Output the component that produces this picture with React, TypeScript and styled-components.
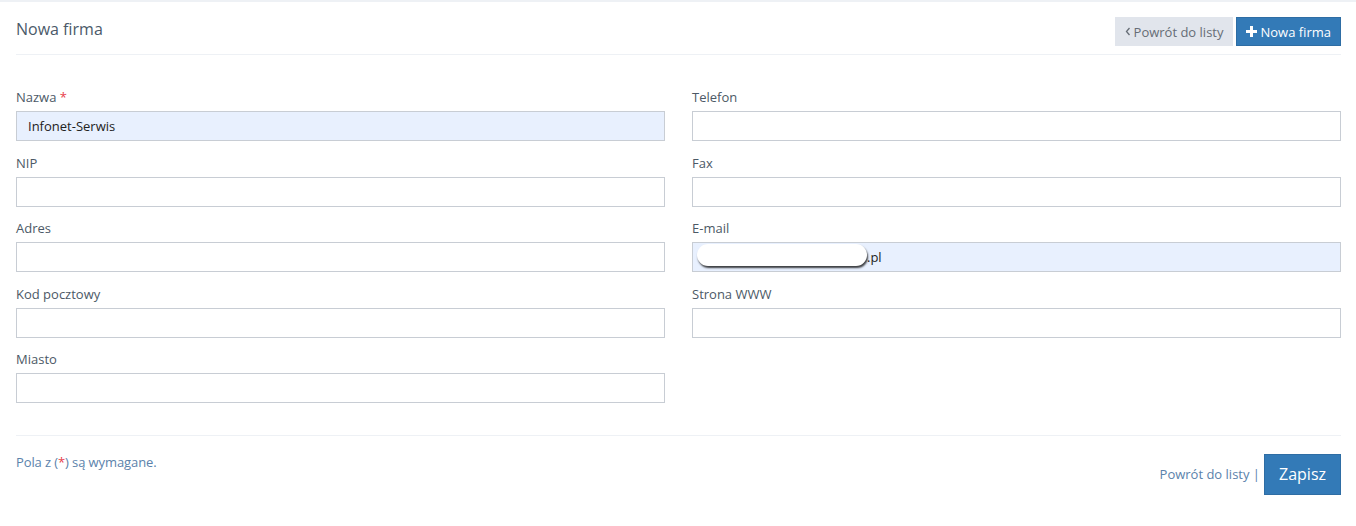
import styled, { createGlobalStyle } from "styled-components";

const GlobalStyle = createGlobalStyle`
    html, body {
        margin: 0;
        padding: 0;
        background: #fff;
        font-family: "Open Sans", "Liberation Sans", sans-serif;
    }
`;

const PageEl = styled.div`
    border-top: 2px solid #eef1f5;
    padding: 0 15px 0 16px;
    width: 1356px;
    box-sizing: border-box;
`;

const HeaderEl = styled.header`
    display: flex;
    justify-content: space-between;
    align-items: center;
    height: 52px;
    border-bottom: 1px solid #eef1f5;
`;

const TitleEl = styled.h1`
    margin: 2px 0 0;
    font-size: 16px;
    font-weight: 400;
    color: #4b5a69;
`;

const ToolbarEl = styled.div`
    display: flex;
    gap: 3px;
    margin-top: 7px;
`;

const ToolButton = styled.button<{ $primary?: boolean }>`
    height: 29px;
    padding: 0 9px;
    font-family: inherit;
    font-size: 13px;
    display: flex;
    align-items: center;
    gap: 3px;
    background: ${(p) => (p.$primary ? "#337ab7" : "#e1e5ec")};
    color: ${(p) => (p.$primary ? "#fff" : "#666d76")};
    border: 1px solid ${(p) => (p.$primary ? "#2e6da4" : "#e1e5ec")};
`;

const FormGrid = styled.div`
    display: grid;
    grid-template-columns: 649px 649px;
    column-gap: 27px;
    padding-top: 34px;
    padding-bottom: 18px;
    border-bottom: 1px solid #eef1f5;
`;

const ColumnEl = styled.div`
    display: flex;
    flex-direction: column;
`;

const FieldEl = styled.div`
    display: flex;
    flex-direction: column;
    height: 65.5px;
`;

const LabelEl = styled.label`
    font-size: 13px;
    color: #4c5966;
    line-height: 16px;
    margin-bottom: 6px;
`;

const RequiredEl = styled.span`
    color: #e73d4a;
`;

const InputWrap = styled.div`
    position: relative;
`;

const InputEl = styled.input<{ $filled?: boolean; $indent?: number }>`
    width: 100%;
    box-sizing: border-box;
    height: 30px;
    border: 1px solid #c8cdd4;
    background: ${(p) => (p.$filled ? "#e8f0fe" : "#fff")};
    font-family: inherit;
    font-size: 13px;
    color: #222;
    padding: 0 11px;
    text-indent: ${(p) => p.$indent ?? 0}px;
    outline: none;
`;

const RedactionEl = styled.div`
    position: absolute;
    left: 5px;
    top: 2px;
    width: 170px;
    height: 22px;
    background: #fff;
    border-radius: 11px;
    box-shadow: 1px 2px 2px rgba(0, 0, 0, 0.75);
`;

const FooterEl = styled.footer`
    display: flex;
    justify-content: space-between;
    align-items: flex-start;
    padding-top: 18px;
`;

const NoteEl = styled.p`
    margin: 1px 0 0;
    font-size: 13px;
    line-height: 14px;
    letter-spacing: -0.1px;
    color: #5b82ab;
`;

const ActionsEl = styled.div`
    display: flex;
    align-items: center;
    gap: 4px;
`;

const BackLink = styled.a`
    font-size: 13px;
    color: #5b82ab;
    text-decoration: none;
`;

const SaveButton = styled.button`
    height: 41px;
    padding: 0 14px;
    background: #337ab7;
    border: 1px solid #2e6da4;
    color: #fff;
    font-family: inherit;
    font-size: 16px;
`;

interface Field {
    label: string;
    required?: boolean;
    value?: string;
    redacted?: boolean;
}

const leftFields: Field[] = [
    { label: "Nazwa", required: true, value: "Infonet-Serwis" },
    { label: "NIP" },
    { label: "Adres" },
    { label: "Kod pocztowy" },
    { label: "Miasto" },
];

const rightFields: Field[] = [
    { label: "Telefon" },
    { label: "Fax" },
    { label: "E-mail", value: ".pl", redacted: true },
    { label: "Strona WWW" },
];

function FormField({ field }: { field: Field }) {
    return (
        <FieldEl>
            <LabelEl>
                {field.label}
                {field.required && <RequiredEl> *</RequiredEl>}
            </LabelEl>
            <InputWrap>
                <InputEl
                    readOnly
                    value={field.value ?? ""}
                    $filled={!!field.value}
                    $indent={field.redacted ? 163 : 0}
                />
                {field.redacted && <RedactionEl />}
            </InputWrap>
        </FieldEl>
    );
}

export default function App() {
    return (
        <PageEl>
            <GlobalStyle />
            <HeaderEl>
                <TitleEl>Nowa firma</TitleEl>
                <ToolbarEl>
                    <ToolButton>
                        <svg width="6" height="9" viewBox="0 0 6 9">
                            <path d="M4.5 1 L1.5 4.5 L4.5 8" fill="none" stroke="#666d76" strokeWidth="1.3" />
                        </svg>
                        Powrót do listy
                    </ToolButton>
                    <ToolButton $primary>
                        <svg width="11" height="11" viewBox="0 0 11 11">
                            <path d="M4 0h3v4h4v3H7v4H4V7H0V4h4z" fill="#fff" />
                        </svg>
                        Nowa firma
                    </ToolButton>
                </ToolbarEl>
            </HeaderEl>
            <FormGrid>
                <ColumnEl>
                    {leftFields.map((f) => (
                        <FormField key={f.label} field={f} />
                    ))}
                </ColumnEl>
                <ColumnEl>
                    {rightFields.map((f) => (
                        <FormField key={f.label} field={f} />
                    ))}
                </ColumnEl>
            </FormGrid>
            <FooterEl>
                <NoteEl>
                    Pola z (<RequiredEl>*</RequiredEl>) są wymagane.
                </NoteEl>
                <ActionsEl>
                    <BackLink href="#">Powrót do listy |</BackLink>
                    <SaveButton>Zapisz</SaveButton>
                </ActionsEl>
            </FooterEl>
        </PageEl>
    );
}
